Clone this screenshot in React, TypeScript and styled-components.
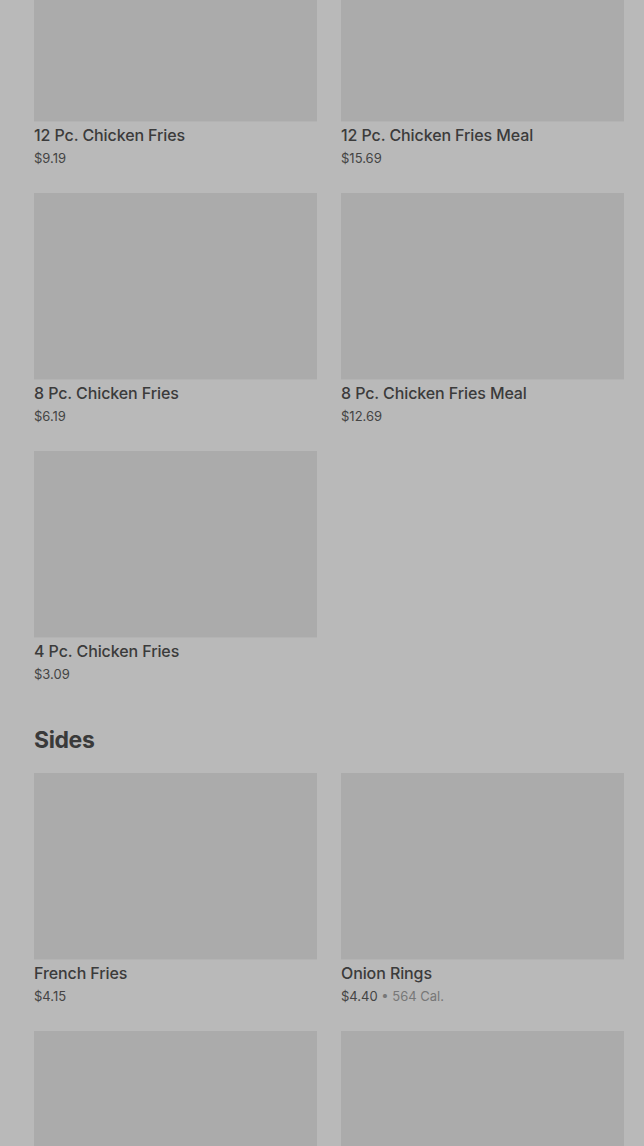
import React from 'react';
import styled, { createGlobalStyle } from 'styled-components';

const GlobalStyle = createGlobalStyle`
    html, body {
        margin: 0;
        padding: 0;
        background-color: #b9b9b9;
        font-family: Inter, "Noto Sans", sans-serif;
        overflow: hidden;
    }
`

const Page = styled.main`
    width: 644px;
    height: 1146px;
    overflow: hidden;
    box-sizing: border-box;
    padding: 0 20px 0 34px;
`

// the menu is scrolled down a bit, so the first row is cut at the top
const Scroller = styled.div`
    margin-top: -65px;
`

const Section = styled.section`
    & + & {
        margin-top: 42px;
    }
`

const SectionTitle = styled.h2`
    margin: 0 0 18px;
    font-size: 23px;
    line-height: 30px;
    font-weight: 700;
    letter-spacing: -0.4px;
    color: #3a3a3a;
`

const Grid = styled.div`
    display: grid;
    grid-template-columns: repeat(2, 283px);
    column-gap: 24px;
    row-gap: 26px;
`

const Card = styled.div`
    display: flex;
    flex-direction: column;
`

const Thumb = styled.div`
    box-sizing: border-box;
    height: 187px;
    background-color: #ababab;
    border-bottom: 1px solid #b3b3b3;
`

const ItemName = styled.div`
    margin-top: 3px;
    font-size: 16px;
    line-height: 20px;
    font-weight: 500;
    letter-spacing: -0.1px;
    color: #3b3b3b;
`

const ItemMeta = styled.div`
    margin-top: 4px;
    font-size: 13px;
    line-height: 18px;
    color: #444444;
`

const Calories = styled.span`
    color: #777777;
`

interface Item {
    name?: string;
    price?: string;
    cal?: string;
}

const chickenFries: Item[] = [
    { name: '12 Pc. Chicken Fries', price: '$9.19' },
    { name: '12 Pc. Chicken Fries Meal', price: '$15.69' },
    { name: '8 Pc. Chicken Fries', price: '$6.19' },
    { name: '8 Pc. Chicken Fries Meal', price: '$12.69' },
    { name: '4 Pc. Chicken Fries', price: '$3.09' },
]

// last row only peeks in at the bottom of the screen
const sides: Item[] = [
    { name: 'French Fries', price: '$4.15' },
    { name: 'Onion Rings', price: '$4.40', cal: '564 Cal.' },
    {},
    {},
]

const MenuCard = function({ item }: { item: Item }): JSX.Element {
    return (
        <Card>
            <Thumb />
            {item.name && <ItemName>{item.name}</ItemName>}
            {item.price && (
                <ItemMeta>
                    {item.price}
                    {item.cal && <Calories> • {item.cal}</Calories>}
                </ItemMeta>
            )}
        </Card>
    )
}

export default function App() {
    return (
        <>
            <GlobalStyle />
            <Page>
                <Scroller>
                    <Section>
                        <Grid>
                            {chickenFries.map((i, n) => <MenuCard key={n} item={i} />)}
                        </Grid>
                    </Section>
                    <Section>
                        <SectionTitle>Sides</SectionTitle>
                        <Grid>
                            {sides.map((i, n) => <MenuCard key={n} item={i} />)}
                        </Grid>
                    </Section>
                </Scroller>
            </Page>
        </>
    )
}
